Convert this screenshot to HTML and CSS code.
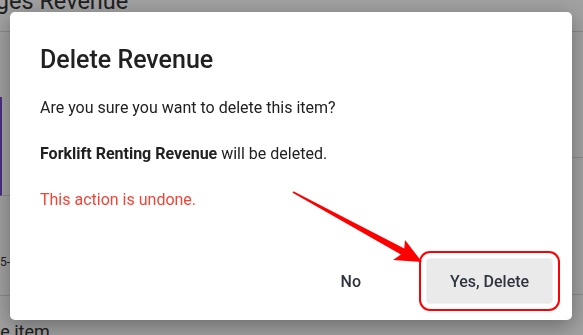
FILE: index.html
```html
<!DOCTYPE html>
<html lang="en">
<head>
  <meta charset="UTF-8">
  <meta name="viewport" content="width=device-width, initial-scale=1.0">
  <link rel="stylesheet" href="styles.css">
</head>
<body>

<div class="page">
  <header class="page-head">
    <h1>Charges Revenue</h1>
  </header>
  <div class="board">
    <div class="board-left">
      <div class="chart-card"></div>
      <div class="date-row"><span>2023-05-25</span></div>
    </div>
    <div class="board-right">
      <div class="stat-row"></div>
      <div class="stat-row tall"></div>
    </div>
  </div>
  <div class="board-foot">Delete item</div>
</div>

<div class="overlay">
  <div class="dialog">
    <h2 class="dialog-title">Delete Revenue</h2>
    <p>Are you sure you want to delete this item?</p>
    <p><strong>Forklift Renting Revenue</strong> will be deleted.</p>
    <p class="warn">This action is undone.</p>
    <div class="dialog-actions">
      <button class="btn btn-plain">No</button>
      <button class="btn btn-grey marked">Yes, Delete</button>
    </div>
  </div>
</div>

<!-- annotation arrow pointing at the confirm button -->
<svg class="arrow" width="583" height="335" viewBox="0 0 583 335">
  <polygon fill="#ff0000" points="422,262 405,240 404.3,248.4 293.4,191.3 292.6,192.7 400.9,254.6 393,260"/>
</svg>

</body>
</html>
```

FILE: styles.css
```css
body {
  font-family: 'Roboto', 'Liberation Sans', sans-serif;
  margin: 0;
  overflow: hidden;
  color: #333;
  background: #fff;
}

.page {
  width: 583px;
  height: 335px;
}

.page-head {
  display: flow-root;
  height: 32px;
  border-bottom: 1px solid #dcdcdc;
  box-sizing: border-box;
}

.page-head h1 {
  margin: -15px 0 0 -53px;
  font-size: 23.5px;
  font-weight: 400;
  line-height: 32px;
  white-space: nowrap;
}

.board {
  display: grid;
  grid-template-columns: 300px 1fr;
}

.board-left {
  padding-top: 65px;
}

.chart-card {
  height: 98px;
  border-left: 2px solid #7749d0;
  border-bottom: 1px solid #dcdcdc;
}

.date-row {
  height: 99px;
  border-bottom: 1px solid #dcdcdc;
  font-size: 12px;
  line-height: 132px;
  white-space: nowrap;
}

.date-row span {
  margin-left: -37px;
}

.stat-row {
  height: 125px;
  border-bottom: 1px solid #dcdcdc;
}

.stat-row.tall {
  height: 136px;
}

.board-foot {
  padding-top: 18px;
  font-size: 18px;
  line-height: 36px;
  text-indent: -41px;
  white-space: nowrap;
}

/* modal */
.overlay {
  position: fixed;
  inset: 0;
  background: rgba(0, 0, 0, 0.37);
  padding: 12px 11px 0 10px;
}

.dialog {
  background: #fff;
  border-radius: 5px;
  padding: 33px 19px 16px 30px;
  box-shadow: 0 6px 22px rgba(0, 0, 0, 0.35);
  color: #212121;
}

.dialog-title {
  margin: 0 0 22px;
  font-size: 25px;
  font-weight: 500;
  line-height: 29px;
  color: #212121;
}

.dialog p {
  margin: 0 0 22px;
  font-size: 16px;
  line-height: 24px;
}

.dialog p.warn {
  color: #f44336;
  margin-bottom: 0;
}

.dialog-actions {
  display: flex;
  justify-content: flex-end;
  align-items: center;
  margin-top: 46px;
  gap: 44px;
}

.btn {
  font-family: inherit;
  font-size: 16px;
  font-weight: 500;
  height: 46px;
  padding: 0 20px;
  border-radius: 4px;
  border: 1px solid transparent;
  color: #2f3440;
  cursor: pointer;
}

.btn-plain {
  background: transparent;
}

.btn-grey {
  width: 127px;
  background: #eaeaea;
  border-color: #f1f1f1;
}

.marked {
  outline: 2px solid #ff0000;
  outline-offset: 5px;
}

.arrow {
  position: fixed;
  top: 0;
  left: 0;
}
```
